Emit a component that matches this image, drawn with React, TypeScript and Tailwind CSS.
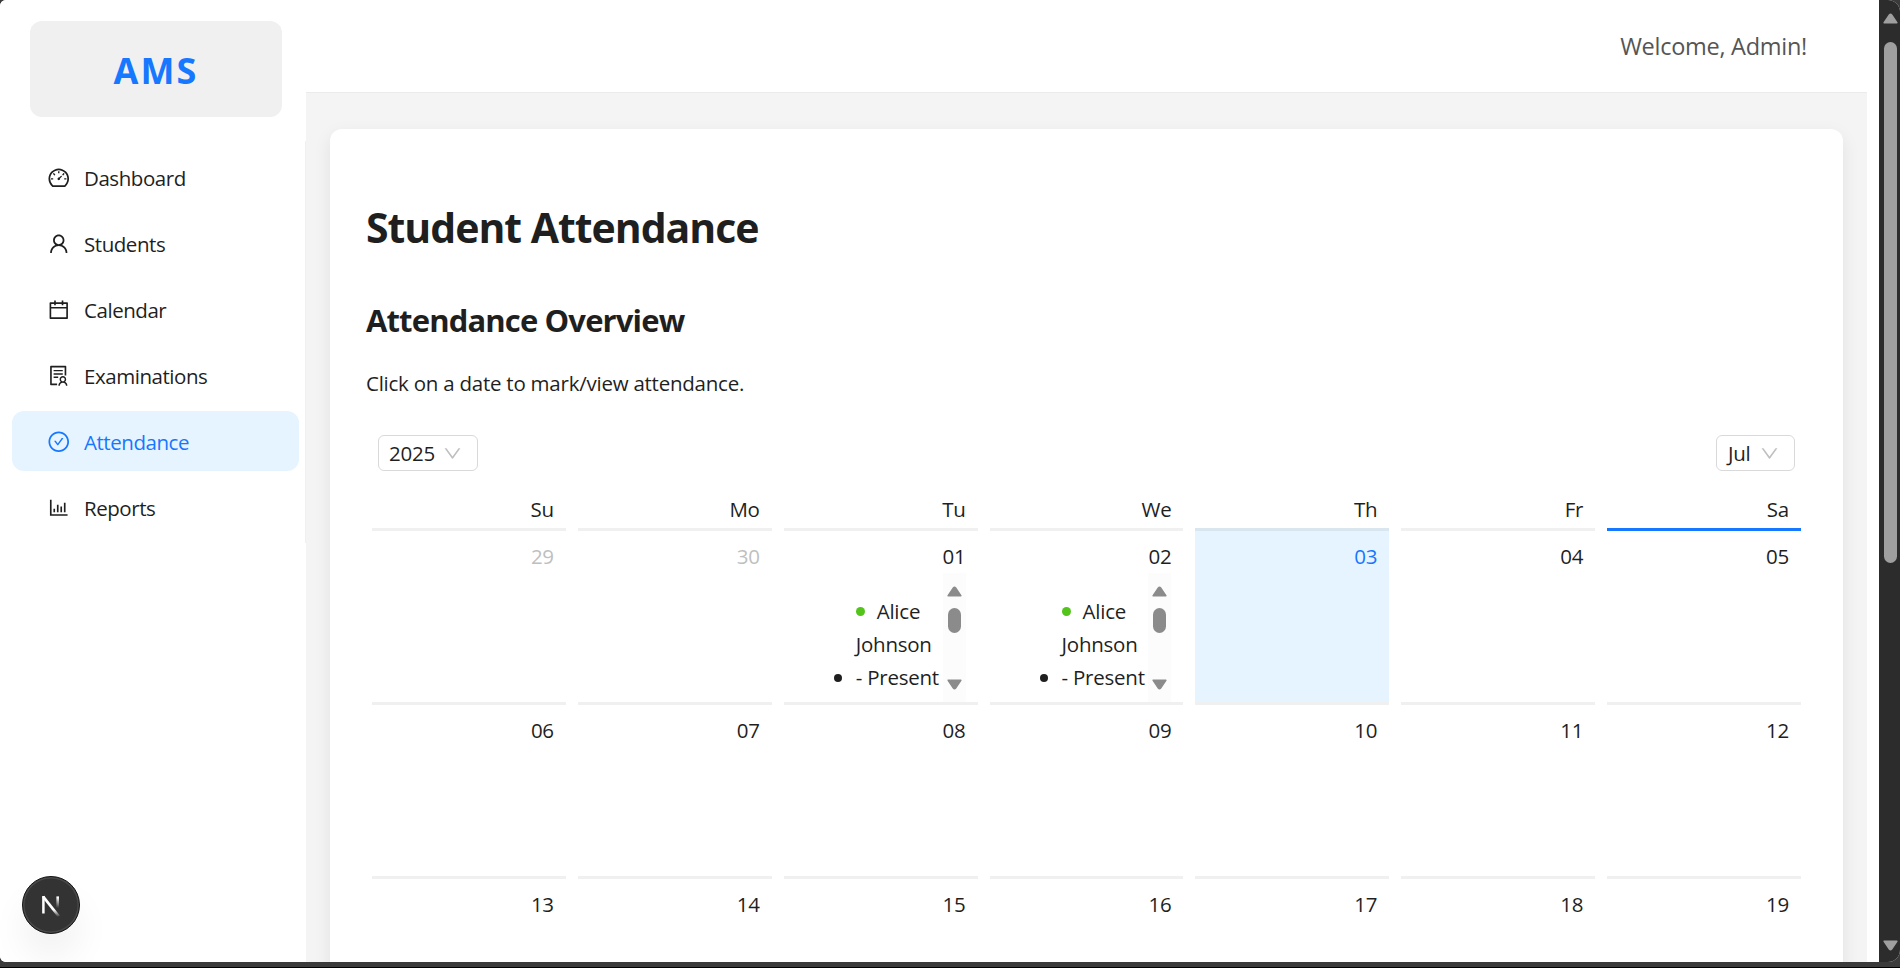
import React from "react";
import type { IconType } from "react-icons";
import {
  AiOutlineDashboard,
  AiOutlineUser,
  AiOutlineCalendar,
  AiOutlineSolution,
  AiOutlineCheckCircle,
  AiOutlineBarChart,
  AiOutlineDown,
} from "react-icons/ai";

type MenuItem = { label: string; Icon: IconType; active?: boolean };

const menu: MenuItem[] = [
  { label: "Dashboard", Icon: AiOutlineDashboard },
  { label: "Students", Icon: AiOutlineUser },
  { label: "Calendar", Icon: AiOutlineCalendar },
  { label: "Examinations", Icon: AiOutlineSolution },
  { label: "Attendance", Icon: AiOutlineCheckCircle, active: true },
  { label: "Reports", Icon: AiOutlineBarChart },
];

type Day = {
  day: string;
  muted?: boolean;
  selected?: boolean;
  today?: boolean;
  events?: boolean;
};

const weekdays = ["Su", "Mo", "Tu", "We", "Th", "Fr", "Sa"];

const weeks: Day[][] = [
  [
    { day: "29", muted: true },
    { day: "30", muted: true },
    { day: "01", events: true },
    { day: "02", events: true },
    { day: "03", selected: true },
    { day: "04" },
    { day: "05", today: true },
  ],
  ["06", "07", "08", "09", "10", "11", "12"].map((day) => ({ day })),
  ["13", "14", "15", "16", "17", "18", "19"].map((day) => ({ day })),
];

function Arrow({ down = false }: { down?: boolean }) {
  return (
    <svg viewBox="0 0 15 11" className="h-[11px] w-[15px] shrink-0" aria-hidden="true">
      <path
        d={down ? "M1.2 1.2h12.6L8.6 9.1q-1.1 1.3-2.2 0z" : "M1.2 9.8h12.6L8.6 1.9q-1.1-1.3-2.2 0z"}
        fill="currentColor"
        stroke="currentColor"
        strokeWidth="1.6"
        strokeLinejoin="round"
      />
    </svg>
  );
}

function Sidebar() {
  return (
    <aside className="flex w-[306px] shrink-0 flex-col bg-white">
      <div className="mt-[21px] mr-6 ml-[30px] flex h-24 items-center justify-center rounded-xl bg-[#f0f0f0] pt-1 text-[36px] font-bold tracking-[2.2px] text-[#1677ff]">
        AMS
      </div>
      <nav className="mt-6 flex flex-col gap-1.5 border-r border-[#f0f0f0] py-1.5 pr-1.5 pl-3">
        {menu.map(({ label, Icon, active }) => (
          <a
            key={label}
            className={
              "flex h-[60px] items-center gap-3.5 rounded-xl pt-0.5 pl-[34.5px] tracking-[-0.45px] " +
              (active ? "bg-[#e6f4ff] text-[#1677ff]" : "text-[#1f1f1f]")
            }
          >
            <Icon className="h-[23.5px] w-[23.5px]" />
            <span>{label}</span>
          </a>
        ))}
      </nav>
    </aside>
  );
}

function Select({ value, size }: { value: string; size: string }) {
  return (
    <div
      className={`flex h-9 items-center justify-between rounded-md border border-[#d9d9d9] bg-white pt-px pr-3.5 ${size}`}
    >
      <span>{value}</span>
      <AiOutlineDown className="h-[21px] w-[21px] text-[#bfbfbf]" />
    </div>
  );
}

function Events() {
  return (
    <div className="flex h-[129px] justify-between overflow-hidden">
      <div className="pt-[22px] pl-[38px] whitespace-nowrap">
        <div className="flex h-[33px] items-center gap-3 pl-[22px]">
          <span className="h-[9px] w-[9px] rounded-full bg-[#52c41a]" />
          Alice
        </div>
        <div className="h-[33px] pl-[22px] leading-[33px]">Johnson</div>
        <div className="flex h-[33px] items-center gap-3.5">
          <span className="h-2 w-2 rounded-full bg-[#1f1f1f]" />- Present
        </div>
      </div>
      <div className="flex w-[23px] flex-col items-center bg-[#fcfcfc] pt-[13px] text-[#8b8b8b]">
        <Arrow />
        <div className="mt-[11px] h-[25px] w-[13px] rounded-full bg-[#8b8b8b]" />
        <div className="h-[46px]" />
        <Arrow down />
      </div>
    </div>
  );
}

function DayCell({ day, muted, selected, today, events }: Day) {
  const border = today
    ? "border-[#1677ff]"
    : selected
      ? "border-[#d9e6f0]"
      : "border-[#f0f0f0]";
  const tone = selected
    ? "bg-[#e6f4ff] text-[#1677ff]"
    : muted
      ? "text-[#bfbfbf]"
      : "text-[#1f1f1f]";
  return (
    <div className={`mx-1.5 h-[174px] border-t-[3px] px-3 pt-[9px] ${border} ${tone}`}>
      <div className="h-[33px] text-right leading-[33px]">{day}</div>
      {events && <Events />}
    </div>
  );
}

function Calendar() {
  return (
    <section className="mt-[35px]">
      <div className="flex justify-between pr-3 pl-3">
        <Select value="2025" size="w-[100px] pl-2.5" />
        <Select value="Jul" size="w-[79px] pl-[11px]" />
      </div>
      <div className="mt-[22px] grid h-[35px] grid-cols-7">
        {weekdays.map((d) => (
          <div key={d} className="mx-1.5 pr-3 text-right leading-8">
            {d}
          </div>
        ))}
      </div>
      {weeks.map((week) => (
        <div key={week[0].day} className="grid grid-cols-7">
          {week.map((d) => (
            <DayCell key={d.day} {...d} />
          ))}
        </div>
      ))}
    </section>
  );
}

function DevBadge() {
  return (
    <div className="absolute top-[876px] left-[22px] flex h-[58px] w-[58px] items-center justify-center rounded-full border border-[#171717] bg-[#333333] shadow-[inset_0_0_0_1.5px_#4a4a4a,0_24px_36px_0_rgba(0,0,0,0.06)]">
      <svg viewBox="0 0 20 24" className="h-6 w-5" aria-hidden="true">
        <defs>
          <linearGradient id="diag" x1="0" y1="0" x2="0" y2="24" gradientUnits="userSpaceOnUse">
            <stop offset="0.7" stopColor="#fff" />
            <stop offset="1" stopColor="#fff" stopOpacity="0" />
          </linearGradient>
          <linearGradient id="stem" x1="0" y1="3" x2="0" y2="15" gradientUnits="userSpaceOnUse">
            <stop offset="0.1" stopColor="#fff" />
            <stop offset="1" stopColor="#fff" stopOpacity="0" />
          </linearGradient>
        </defs>
        <path d="M2.4 20.6V3" stroke="#fff" strokeWidth="2.5" fill="none" />
        <path d="M2.2 3.6L17.8 23.4" stroke="url(#diag)" strokeWidth="2.6" fill="none" />
        <rect x="15.4" y="3.4" width="2.6" height="12" fill="url(#stem)" />
      </svg>
    </div>
  );
}

export default function App() {
  return (
    <div className="h-[968px] w-[1900px] overflow-hidden bg-black font-['Open_Sans','Noto_Sans',sans-serif] text-[20.5px] tracking-[-0.24px] text-[#1f1f1f]">
      <div className="h-[967px] bg-[#3a3b3a]">
        <div className="relative flex h-[962px] overflow-hidden rounded-l-md rounded-r-xl bg-white">
          <Sidebar />
          <div className="flex w-[1561px] flex-col bg-[#f4f4f4]">
            <header className="flex h-[93px] shrink-0 items-center justify-end border-b border-[#ebebeb] bg-white pt-0.5 pr-[60px] text-[23.5px] tracking-[-0.27px] text-[#555555]">
              Welcome, Admin!
            </header>
            <main className="mx-6 mt-9 h-[1100px] shrink-0 rounded-xl bg-white px-9 pt-[68px] shadow-[0_6px_18px_rgba(0,0,0,0.08)]">
              <h1 className="text-[41px] leading-[60px] font-bold tracking-[-1.02px]">
                Student Attendance
              </h1>
              <h2 className="mt-[39px] text-[31px] leading-[48px] font-bold tracking-[-0.86px]">
                Attendance Overview
              </h2>
              <p className="mt-[23px] leading-[33px]">Click on a date to mark/view attendance.</p>
              <Calendar />
            </main>
          </div>
          <div className="ml-3 flex w-[21px] flex-col items-center justify-between bg-[#2c2c2c] pt-[13px] pb-[11px] pl-0.5 text-[#9f9f9f]">
            <div className="flex flex-col items-center">
              <Arrow />
              <div className="mt-[18px] h-[521px] w-[13px] rounded-full bg-[#9f9f9f]" />
            </div>
            <Arrow down />
          </div>
          <DevBadge />
        </div>
      </div>
    </div>
  );
}
